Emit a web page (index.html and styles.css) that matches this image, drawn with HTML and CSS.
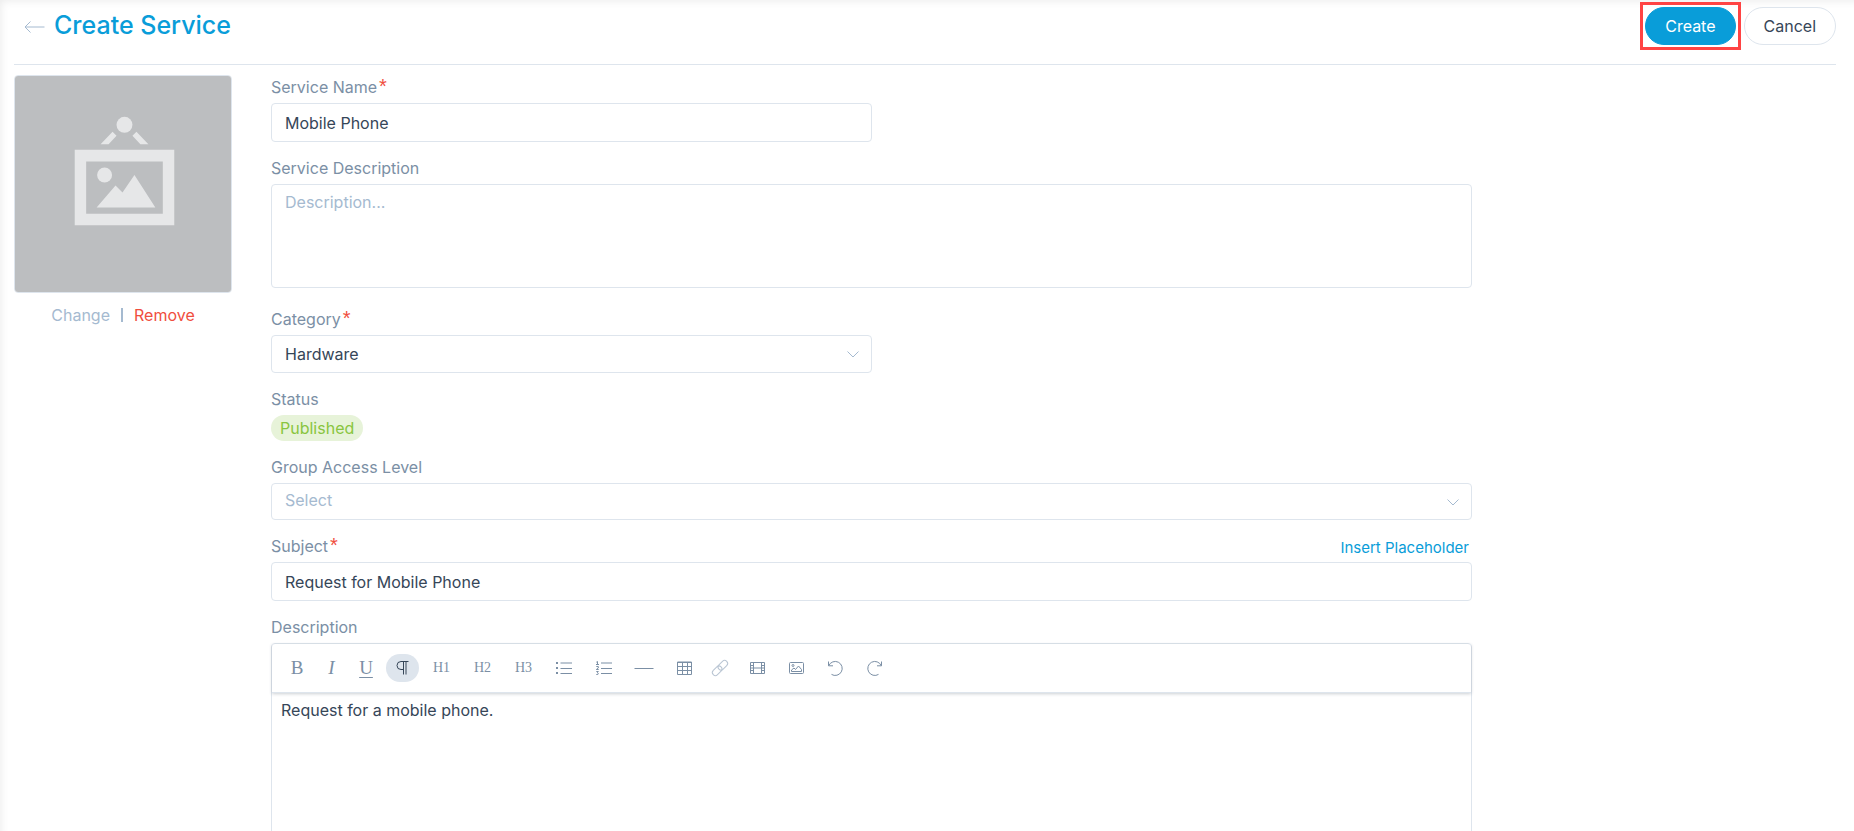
FILE: index.html
```html
<!DOCTYPE html>
<html lang="en">
<head>
    <meta charset="UTF-8">
    <meta name="viewport" content="width=device-width, initial-scale=1.0">
    <title>Create Service</title>
    <link rel="stylesheet" href="styles.css">
</head>
<body>
    <div class="page">
        <header class="page-header">
            <a href="#" class="back" aria-label="Back">
                <svg width="21" height="12" viewBox="0 0 21 12"><path d="M1 6H20.500M6.500 .5L1 6l5.500 5.500"/></svg>
            </a>
            <h1>Create Service</h1>
            <div class="actions">
                <span class="highlight"><button type="submit" form="serviceForm" class="btn btn-primary">Create</button></span>
                <button type="button" class="btn">Cancel</button>
            </div>
        </header>

        <main class="content">
            <aside class="picture">
                <svg class="picture-image" viewBox="0 0 217 217" role="img" aria-label="Service image">
                    <rect width="217" height="217" fill="#bcbec0"/>
                    <g fill="#e6e7e8">
                        <circle cx="110" cy="49" r="8"/>
                        <path d="M98 56l4 4-8 8.500h-8zM122 56l-4 4 8 8.500h8z"/>
                        <path fill-rule="evenodd" d="M60 74h100v76H60zM71.500 86v52.500h77V86z"/>
                        <circle cx="90" cy="99.500" r="7.500"/>
                        <path d="M82 132l19-22 7 7 12-17.500L141 132z"/>
                    </g>
                </svg>
                <div class="picture-links">
                    <a href="#" class="change">Change</a>
                    <span class="divider"></span>
                    <a href="#" class="remove">Remove</a>
                </div>
            </aside>

            <form id="serviceForm" class="service-form">
                <div class="field half">
                    <label for="serviceName">Service Name<span class="required">*</span></label>
                    <input type="text" id="serviceName" value="Mobile Phone">
                </div>

                <div class="field field-textarea">
                    <label for="serviceDescription">Service Description</label>
                    <textarea id="serviceDescription" placeholder="Description..."></textarea>
                </div>

                <div class="field half">
                    <label for="category">Category<span class="required">*</span></label>
                    <div class="select">
                        <select id="category">
                            <option>Hardware</option>
                        </select>
                        <svg class="chevron" width="12" height="7" viewBox="0 0 12 7"><path d="M.5 .5L6 6l5.500-5.500"/></svg>
                    </div>
                </div>

                <div class="field">
                    <span class="label">Status</span>
                    <span class="badge">Published</span>
                </div>

                <div class="field">
                    <label for="groupAccess">Group Access Level</label>
                    <div class="select">
                        <select id="groupAccess" class="empty">
                            <option>Select</option>
                        </select>
                        <svg class="chevron" width="12" height="7" viewBox="0 0 12 7"><path d="M.5 .5L6 6l5.500-5.500"/></svg>
                    </div>
                </div>

                <div class="field">
                    <div class="label-row">
                        <label for="subject">Subject<span class="required">*</span></label>
                        <a href="#" class="placeholder-link">Insert Placeholder</a>
                    </div>
                    <input type="text" id="subject" value="Request for Mobile Phone">
                </div>

                <div class="field">
                    <span class="label" id="descriptionLabel">Description</span>
                    <div class="editor">
                        <div class="toolbar">
                            <button type="button" class="tool letter" title="Bold">B</button>
                            <button type="button" class="tool letter italic" title="Italic">I</button>
                            <button type="button" class="tool letter underline" title="Underline">U</button>
                            <button type="button" class="tool active" title="Paragraph">
                                <svg width="13" height="14" viewBox="0 0 13 14"><path d="M12.500 .5H5a4 4 0 0 0 0 8h2.500M7.500 .5v13M10 .5v13"/></svg>
                            </button>
                            <button type="button" class="tool heading" title="Heading 1">H1</button>
                            <button type="button" class="tool heading" title="Heading 2">H2</button>
                            <button type="button" class="tool heading" title="Heading 3">H3</button>
                            <button type="button" class="tool" title="Bullet list">
                                <svg width="16" height="14" viewBox="0 0 16 14"><path d="M4.500 2H16M4.500 7.500H16M4.500 12.500H16"/><path class="solid" d="M0 1h2v2H0zM0 6h2v2H0zM0 11h2v2H0z"/></svg>
                            </button>
                            <button type="button" class="tool" title="Numbered list">
                                <svg width="15" height="14" viewBox="0 0 15 14"><path d="M5 2H16M5 7.500H16M5 12.500H16M.3 1.200L1.500 .5v3M0 3.500h3M.3 5.500h2v1.500L.3 8.500h2.400M.3 10.500h2l-1 1.200 1 .6-.5 1.200H.3"/></svg>
                            </button>
                            <button type="button" class="tool" title="Horizontal line">
                                <svg width="18" height="14" viewBox="0 0 18 14"><path d="M-.5 7.500h19"/></svg>
                            </button>
                            <button type="button" class="tool" title="Table">
                                <svg width="15" height="14" viewBox="0 0 15 14"><path d="M.5 1h14v12.500H.5zM.5 1.500h14M.5 5.500h14M.5 9.500h14M5.500 1v12.500M10.500 1v12.500"/></svg>
                            </button>
                            <button type="button" class="tool muted" title="Link">
                                <svg width="10" height="16" viewBox="4 0 10 16"><g transform="rotate(-45 8 8)"><rect x="-1.500" y="5" width="11" height="6" rx="3"/><rect x="6.500" y="5" width="11" height="6" rx="3"/></g></svg>
                            </button>
                            <button type="button" class="tool" title="Video">
                                <svg width="15" height="12" viewBox="0 0 15 12"><path d="M.5 .5h14v11H.5zM3.500 .5v11M11.500 .5v11M3.500 6h8M.5 3.500h3M.5 6h3M.5 8.500h3M11.500 3.500h3M11.500 6h3M11.500 8.500h3"/></svg>
                            </button>
                            <button type="button" class="tool" title="Image">
                                <svg width="15" height="12" viewBox="0 0 15 12"><rect x=".5" y=".5" width="14" height="11" rx="1"/><circle cx="4" cy="3.500" r="1"/><path d="M2.500 9.500V8L5 6l1.500 1.500L9.500 4l3 3.500v2z"/></svg>
                            </button>
                            <button type="button" class="tool" title="Undo">
                                <svg width="15" height="15" viewBox="0 0 15 15"><path d="M.5 .5v4.300h4.500M.8 4.600A7 7 0 1 1 3.500 13.400"/></svg>
                            </button>
                            <button type="button" class="tool" title="Redo">
                                <svg width="15" height="15" viewBox="0 0 15 15"><path d="M14.500 .5v4.300H10M14.200 4.600A7 7 0 1 0 11.500 13.400"/></svg>
                            </button>
                        </div>
                        <div class="editor-body" contenteditable="true" role="textbox" aria-labelledby="descriptionLabel">Request for a mobile phone.</div>
                    </div>
                </div>
            </form>
        </main>
    </div>
</body>
</html>
```
FILE: styles.css
```css
* {
    box-sizing: border-box;
}
body {
    margin: 0;
    background-color: #fff;
    color: #364658;
    font-family: Inter, sans-serif;
    font-size: 16px;
    line-height: 22px;
}
a {
    text-decoration: none;
}
button, input, textarea, select {
    font: inherit;
    color: inherit;
}
svg {
    display: block;
    fill: none;
}
.page {
    height: 100vh;
    overflow: hidden;
    padding: 0 18px 0 14px;
    box-shadow: inset 5px 5px 8px -4px rgba(0, 0, 0, 0.08);
}

/* Header */
.page-header {
    display: flex;
    align-items: flex-start;
    height: 65px;
    padding-top: 2px;
    border-bottom: 1px solid #dee5ed;
}
.back {
    padding: 19px 9px 0 10px;
    stroke: #a5bad0;
}
h1 {
    margin: 7px 0 0;
    color: #099dd9;
    font-size: 25px;
    font-weight: 500;
    line-height: 32px;
}
.actions {
    display: flex;
    align-items: center;
    gap: 3px;
    margin-left: auto;
}
.highlight {
    padding: 2px;
    border: 3px solid #ff4343;
}
.btn {
    display: block;
    height: 38px;
    padding: 0 19px;
    background-color: #fff;
    border: 1px solid #dee5ed;
    border-radius: 19px;
    cursor: pointer;
}
.btn-primary {
    background-color: #099dd9;
    border-color: #099dd9;
    color: #fff;
}

/* Picture */
.content {
    display: flex;
    align-items: flex-start;
    gap: 39px;
    padding-top: 10px;
}
.picture {
    flex: 0 0 218px;
}
.picture-image {
    width: 100%;
    border: 1px solid #dee5ed;
    border-radius: 4px;
}
.picture-links {
    display: flex;
    align-items: center;
    justify-content: center;
    gap: 11px;
    padding-top: 11px;
}
.change {
    color: #a5bad0;
}
.divider {
    width: 2px;
    height: 14px;
    background-color: #a5bad0;
}
.remove {
    color: #f04e3e;
}

/* Form */
.service-form {
    display: flex;
    flex: 1;
    flex-direction: column;
    gap: 15px;
    max-width: 1201px;
    padding-top: 1px;
}
.half {
    width: 50%;
}
.field label,
.label {
    display: block;
    height: 22px;
    margin-bottom: 5px;
    color: #7b8fa5;
}
.label-row {
    display: flex;
    justify-content: space-between;
}
.required {
    margin-left: 2px;
    color: #f04e3e;
    font-family: "Liberation Sans", sans-serif;
    font-size: 20px;
    line-height: 0;
}
.field input,
.field textarea,
.field select {
    display: block;
    width: 100%;
    height: 38px;
    padding: 0 13px;
    background-color: #fff;
    border: 1px solid #dee5ed;
    border-radius: 4px;
    outline: none;
}
.field input {
    height: 39px;
}
.field textarea {
    height: 104px;
    padding: 6px 13px;
    resize: none;
}
.field-textarea {
    padding-bottom: 5px;
}
.field ::placeholder,
.field .empty {
    color: #a5bad0;
}
.field .empty {
    height: 37px;
    padding-bottom: 3px;
}
.select {
    position: relative;
}
.select select {
    appearance: none;
}
.chevron {
    position: absolute;
    top: 16px;
    right: 13px;
    stroke: #a5bad0;
    pointer-events: none;
}
.badge {
    display: inline-block;
    height: 26px;
    padding: 2px 9px;
    background-color: #e7f3d9;
    border-radius: 13px;
    color: #89c540;
    vertical-align: top;
}
.placeholder-link {
    padding: 2px 3px 0 0;
    color: #099dd9;
    font-size: 15px;
}

/* Editor */
.editor {
    border: 1px solid #dee5ed;
    border-radius: 4px;
}
.toolbar {
    display: flex;
    align-items: center;
    gap: 4px;
    height: 49px;
    padding: 0 9px;
    border-bottom: 1px solid #dee5ed;
    box-shadow: 0 1px 3px rgba(54, 70, 88, 0.25);
}
.tool {
    display: flex;
    align-items: center;
    justify-content: center;
    height: 28px;
    padding: 0 10px;
    background: none;
    border: none;
    border-radius: 14px;
    color: #7b8fa5;
    stroke: #7b8fa5;
    cursor: pointer;
}
.tool svg {
    overflow: visible;
}
.tool .solid {
    fill: #7b8fa5;
    stroke: none;
}
.active {
    background-color: #dee5ed;
    stroke: #364658;
}
.muted {
    stroke: #b9c5d3;
}
.letter {
    width: 32px;
    font-family: "Liberation Serif", serif;
    font-size: 19px;
}
.italic {
    width: 29px;
    font-style: italic;
}
.underline {
    text-decoration: underline;
    text-underline-offset: 3px;
    text-decoration-thickness: 1px;
}
.heading {
    width: 37px;
    font-family: "Liberation Serif", serif;
    font-size: 14px;
}
.editor-body {
    min-height: 240px;
    padding: 6px 9px;
    outline: none;
}
```
